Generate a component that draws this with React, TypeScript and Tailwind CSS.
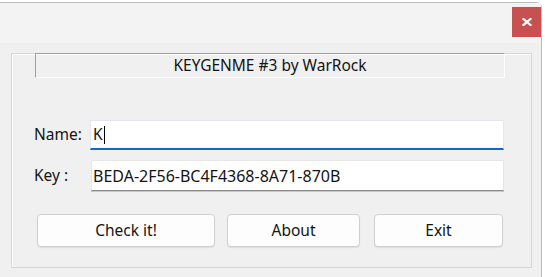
import React from "react";

const font = { fontFamily: '"Noto Sans", "Open Sans", "Liberation Sans", sans-serif' };

export default function App() {
  return (
    <div className="w-[545px] h-[277px] bg-white overflow-hidden" style={font}>
      <div className="mt-[2px] w-[542px] h-[275px] border-t border-r border-[#bcbcbc] rounded-tr-[6px] bg-[#f0f0f0] flex flex-col">
        {/* title bar */}
        <div className="h-[40px] bg-[#f3f3f3] flex justify-end items-start">
          <div className="mt-[4px] w-[29px] h-[30px] bg-[#c75050] flex items-center justify-center">
            <svg width="10" height="8" viewBox="0 0 10 8">
              <path d="M1.5 1 L8.5 7 M8.5 1 L1.5 7" stroke="#ffffff" strokeWidth="2.2" strokeLinecap="square" />
            </svg>
          </div>
        </div>
        {/* body */}
        <div className="flex-1 pl-[11px] pt-[10px]">
          <div className="w-[521px] h-[215px] border border-[#d6d6d6] shadow-[inset_1px_1px_0_#ffffff] pl-[23px] flex flex-col">
            <div className="-mt-px w-[470px] h-[25px] border-t border-l border-t-[#a0a0a0] border-l-[#a0a0a0] border-b border-r border-b-white border-r-white flex items-center justify-center text-[15.5px] text-[#141414]">
              KEYGENME #3 by WarRock
            </div>
            <div className="mt-[42px] flex items-center h-[30px]">
              <span className="w-[56px] text-[15.5px] text-[#141414] -ml-px">Name:</span>
              <div className="w-[414px] h-[30px] bg-white border border-[#e4e8ee] border-b-2 border-b-[#1467c2] flex items-center pl-[2px] text-[15.5px] text-[#141414]">
                K<span className="inline-block w-px h-[18px] bg-black ml-px" />
              </div>
            </div>
            <div className="mt-[10px] flex items-center h-[31px]">
              <span className="w-[57px] text-[15.5px] text-[#141414] -ml-px">Key :</span>
              <div className="w-[413px] h-[31px] bg-white border border-[#e6e6e6] border-b-[#8a8a8a] shadow-[0_1px_0_#c8c8c8] flex items-center pl-[1px] text-[16px] text-[#141414]">
                BEDA-2F56-BC4F4368-8A71-870B
              </div>
            </div>
            <div className="mt-[23px] ml-[2px] flex">
              <button className="w-[178px] h-[33px] rounded-[4px] bg-[#fdfdfd] border border-[#d0d0d0] shadow-[0_1px_1px_rgba(0,0,0,0.08)] text-[15.5px] text-[#141414]">
                Check it!
              </button>
              <button className="ml-[12px] w-[133px] h-[33px] rounded-[4px] bg-[#fdfdfd] border border-[#d0d0d0] shadow-[0_1px_1px_rgba(0,0,0,0.08)] text-[15.5px] text-[#141414]">
                About
              </button>
              <button className="ml-[14px] w-[129px] h-[33px] rounded-[4px] bg-[#fdfdfd] border border-[#d0d0d0] shadow-[0_1px_1px_rgba(0,0,0,0.08)] text-[15.5px] text-[#141414]">
                Exit
              </button>
            </div>
          </div>
        </div>
      </div>
    </div>
  );
}
